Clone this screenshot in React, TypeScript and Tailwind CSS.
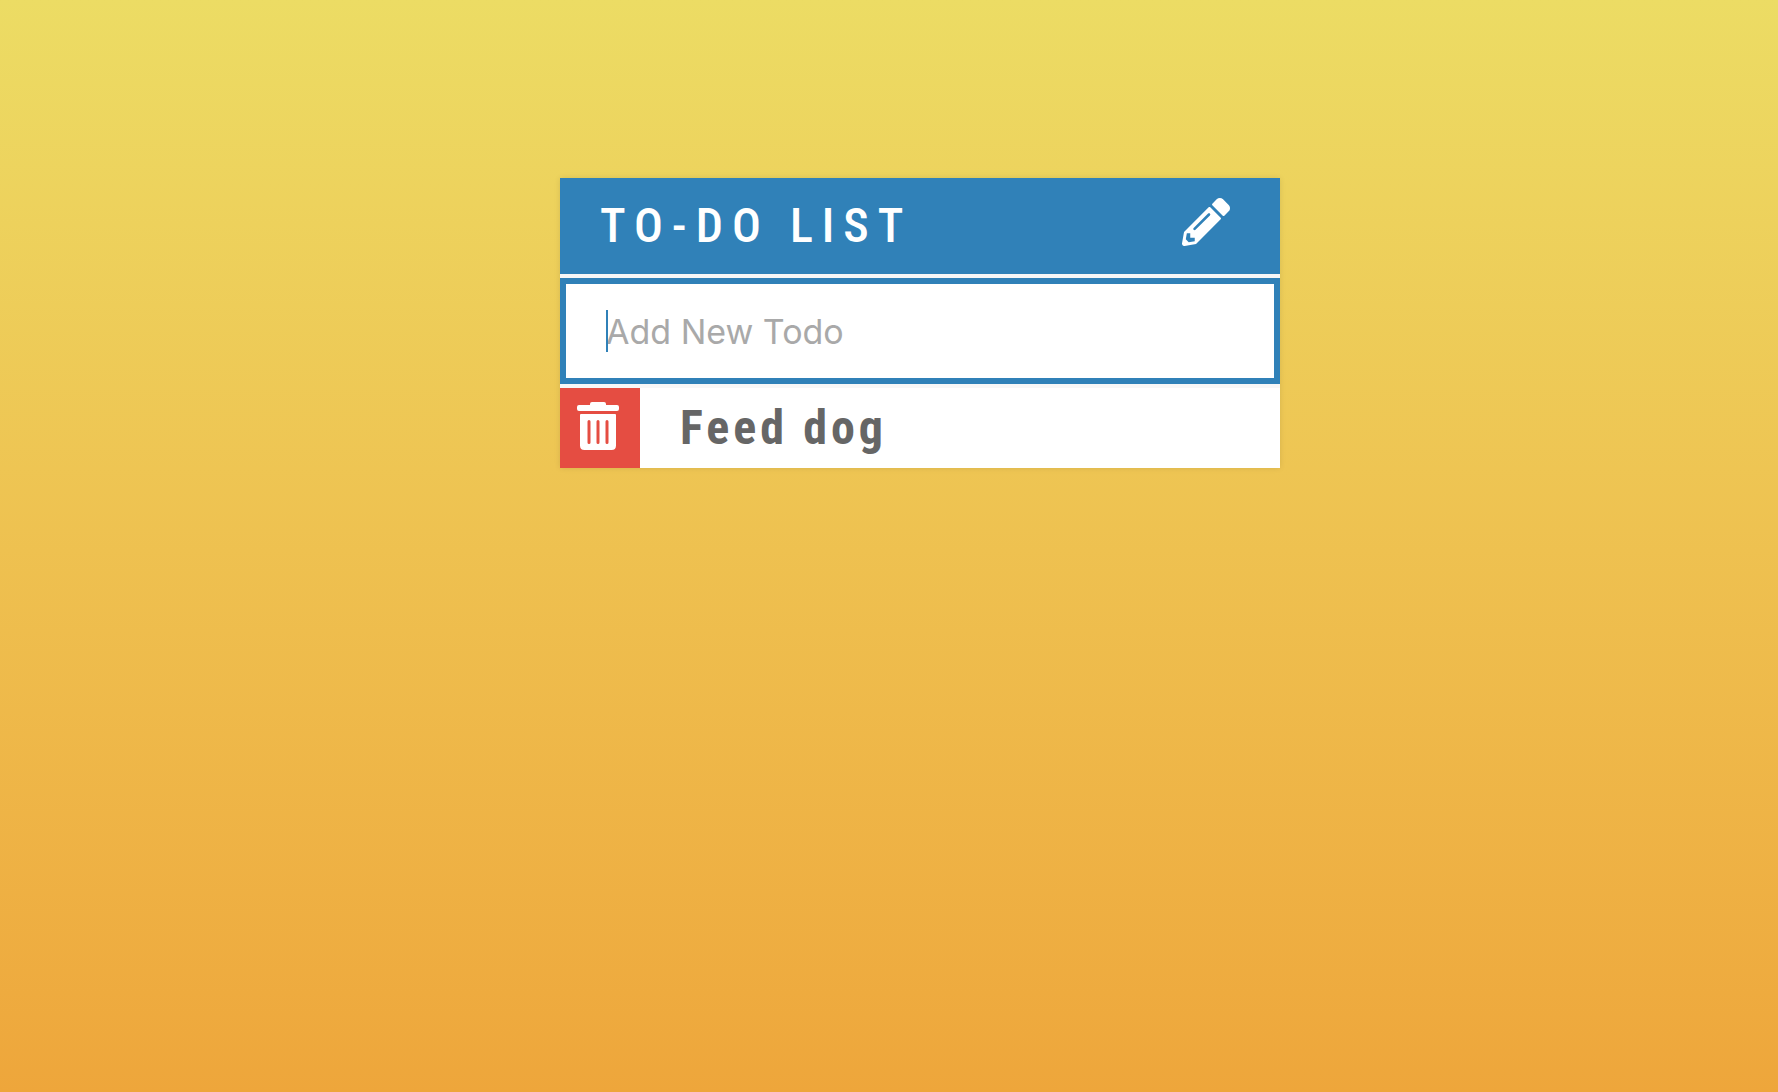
import { useState } from "react";
import { FaPencilAlt } from "react-icons/fa";

function TrashIcon() {
  return (
    <svg viewBox="0 0 42 48" className="h-12 w-[42px]" fill="currentColor" aria-hidden="true">
      <path d="M2 3H13V2Q13 0 15 0H27Q29 0 29 2V3H40Q42 3 42 5V7Q42 9 40 9H2Q0 9 0 7V5Q0 3 2 3Z" />
      <path
        fillRule="evenodd"
        d="M4 12H38Q39 12 39 13V43.5Q39 48 34.5 48H7.5Q3 48 3 43.5V13Q3 12 4 12ZM12 18A1.5 1.5 0 0 0 10.5 19.5V40.5A1.5 1.5 0 0 0 13.5 40.5V19.5A1.5 1.5 0 0 0 12 18ZM21 18A1.5 1.5 0 0 0 19.5 19.5V40.5A1.5 1.5 0 0 0 22.5 40.5V19.5A1.5 1.5 0 0 0 21 18ZM30 18A1.5 1.5 0 0 0 28.5 19.5V40.5A1.5 1.5 0 0 0 31.5 40.5V19.5A1.5 1.5 0 0 0 30 18Z"
      />
    </svg>
  );
}

export default function App() {
  const [text, setText] = useState("");
  const [todos, setTodos] = useState(["Feed dog"]);
  const [open, setOpen] = useState(true);

  return (
    <main className="min-h-screen bg-linear-to-b from-[#ecdc64] to-[#eea63b] pt-[178px] pl-[62px]">
      <section className="mx-auto flex w-full max-w-[720px] flex-col gap-1 bg-[#f7f7f7] shadow-[0_0_6px_rgba(0,0,0,0.1)]">
        <header className="flex h-24 items-center justify-between bg-[#3081b8] pr-[50px] pl-10 text-white">
          <h1 className="font-['Roboto_Condensed','Roboto',sans-serif] text-[48px] leading-[94px] font-medium tracking-[9px] whitespace-nowrap">
            TO-DO LIST
          </h1>
          <button type="button" aria-label="Toggle new todo" className="-mt-2" onClick={() => setOpen(!open)}>
            <FaPencilAlt className="size-12" />
          </button>
        </header>
        {open && (
          <form
            className="relative"
            onSubmit={(e) => {
              e.preventDefault();
              if (text.trim()) setTodos([...todos, text]);
              setText("");
            }}
          >
            <input
              type="text"
              aria-label="Add New Todo"
              placeholder="Add New Todo"
              value={text}
              onChange={(e) => setText(e.target.value)}
              className="block h-[106px] w-full border-6 border-[#3081b8] bg-white px-10 font-['Inter',sans-serif] text-[34px] text-[#666666] outline-none placeholder:text-[#a9a9a9]"
            />
            {!text && <span className="pointer-events-none absolute top-8 left-[46px] h-[42px] w-0.5 bg-[#3081b8]" />}
          </form>
        )}
        <ul>
          {todos.map((todo, i) => (
            <li key={i} className="flex h-20 items-center bg-white">
              <button
                type="button"
                aria-label={`Delete ${todo}`}
                onClick={() => setTodos(todos.filter((_, n) => n !== i))}
                className="flex size-20 shrink-0 justify-center bg-[#e54d42] pt-3.5 pr-1 text-white"
              >
                <TrashIcon />
              </button>
              <span className="pl-10 font-['Roboto_Condensed','Roboto',sans-serif] text-[48px] leading-[80px] font-bold tracking-[4px] text-[#666666]">
                {todo}
              </span>
            </li>
          ))}
        </ul>
      </section>
    </main>
  );
}
